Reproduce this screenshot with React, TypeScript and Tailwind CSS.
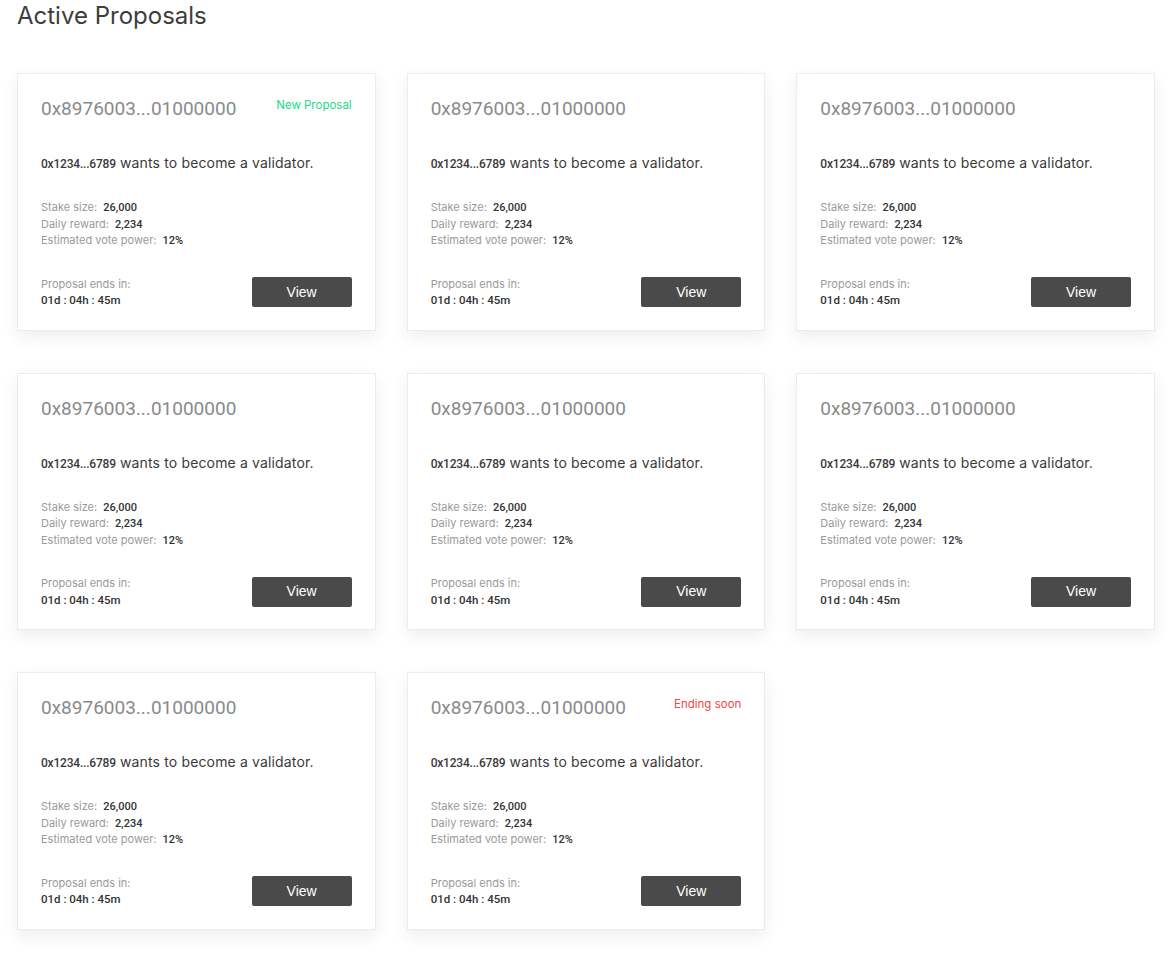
import React from "react";

type Tag = { text: string; cls: string } | null;

function Stat({ label, value }: { label: string; value: string }) {
  return (
    <div>
      {label}{" "}
      <span className="ml-[3px] font-[Roboto,sans-serif] text-[11px] leading-none font-medium text-[#333]">
        {value}
      </span>
    </div>
  );
}

function Card({ tag }: { tag: Tag }) {
  return (
    <div className="flex flex-col bg-white border border-[#ececec] shadow-[0_6px_16px_rgba(0,0,0,0.07)] px-[23px] pt-[24px] pb-[21px] font-[Inter,sans-serif]">
      <div className="flex items-start justify-between">
        <div className="font-[Roboto,sans-serif] text-[19px] leading-[22px] text-[#8a8a8a]">
          0x8976003...01000000
        </div>
        {tag && <div className={tag.cls}>{tag.text}</div>}
      </div>
      <div className="mt-[33px] text-[14px] leading-[20px] text-[#3a3a3a] tracking-[0.15px]">
        <span className="font-[Roboto,sans-serif] text-[12px] leading-none font-medium tracking-[-0.2px]">
          0x1234...6789
        </span>{" "}
        wants to become a validator.
      </div>
      <div className="mt-[26px] flex flex-col text-[11px] leading-[16.5px] text-[#9a9a9a]">
        <Stat label="Stake size:" value="26,000" />
        <Stat label="Daily reward:" value="2,234" />
        <Stat label="Estimated vote power:" value="12%" />
      </div>
      <div className="mt-[27px] flex items-center justify-between">
        <div className="flex flex-col text-[11px] leading-[16.5px] text-[#9a9a9a]">
          <div>Proposal ends in:</div>
          <div className="font-[Roboto,sans-serif] text-[11.5px] font-medium text-[#333]">
            01d : 04h : 45m
          </div>
        </div>
        <button className="w-[100px] h-[30px] rounded-[2px] bg-[#4a4a4a] text-white text-[14px] font-['Liberation_Sans',Arial,sans-serif]">
          View
        </button>
      </div>
    </div>
  );
}

export default function App() {
  const tags: Tag[] = [
    { text: "New Proposal", cls: "-mt-[1px] text-[11.5px] leading-[16px] text-[#22d98a]" },
    null,
    null,
    null,
    null,
    null,
    null,
    { text: "Ending soon", cls: "-mt-[1px] text-[11.5px] leading-[16px] text-[#f2464a]" },
  ];
  return (
    <div className="min-h-screen bg-white pb-10">
      <h1 className="pl-[17px] pt-[2px] font-[Inter,sans-serif] text-[24px] leading-[28px] font-normal text-[#3d3d3d]">
        Active Proposals
      </h1>
      <div className="mt-[43px] grid grid-cols-3 gap-x-[31px] gap-y-[42px] pl-[17px] pr-[16px]">
        {tags.map((t, i) => (
          <Card key={i} tag={t} />
        ))}
      </div>
    </div>
  );
}
